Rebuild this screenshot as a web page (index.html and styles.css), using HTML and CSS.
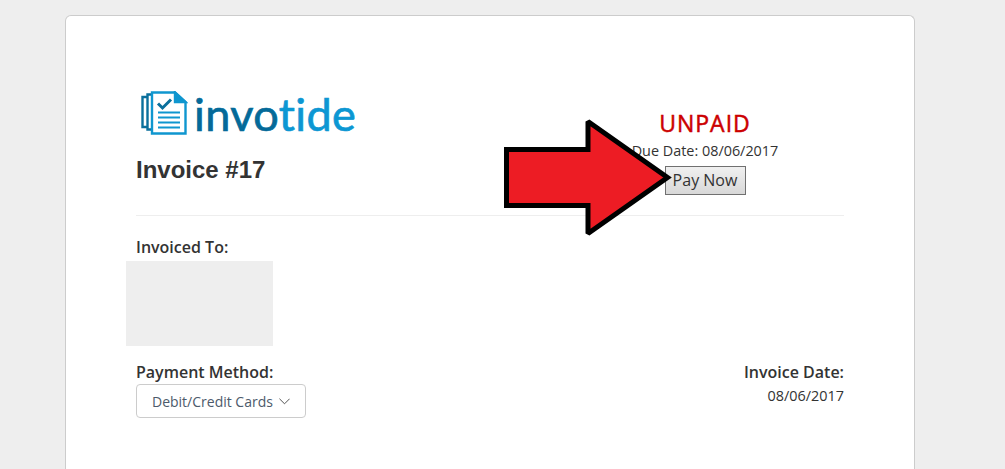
FILE: index.html
```html
<!DOCTYPE html>
<html lang="en">
<head>
    <meta charset="UTF-8">
    <meta name="viewport" content="width=device-width, initial-scale=1.0">
    <title>Invoice #17</title>
    <link rel="stylesheet" href="styles.css">
</head>
<body>
    <div class="card">
        <!-- header -->
        <div class="header">
            <div class="brand">
                <div class="logo">
                    <svg class="logo-icon" width="48" height="44" viewBox="0 0 48 44" fill="none" stroke="#0f7fb0" stroke-width="2.4">
                        <path d="M7 6H2.5V36H7" stroke="#0a6f9c"/>
                        <path d="M11 3.5H7.5V38.5H11" stroke="#0a6f9c"/>
                        <path d="M12 1.5H35L45.5 11V42.5H12Z" stroke="#0f96cf"/>
                        <path d="M35 1.5V11H45.5Z" fill="#0f96cf" stroke="#0f96cf"/>
                        <path d="M18 12.5L22.5 17L31 8.5" stroke="#0a6f9c" stroke-width="3"/>
                        <path d="M18 21.5H40M18 26.5H40M18 31.5H40M18 36.5H40" stroke="#0f96cf" stroke-width="2.2"/>
                    </svg>
                    <span class="logo-text"><span class="logo-dark">invo</span><span class="logo-light">tide</span></span>
                </div>
                <h1 class="invoice-no">Invoice #17</h1>
            </div>
            <div class="status">
                <div class="status-label">UNPAID</div>
                <div class="due">Due Date: 08/06/2017</div>
                <button class="pay" type="button">Pay Now</button>
            </div>
        </div>

        <hr class="divider">

        <div class="label">Invoiced To:</div>
        <div class="redacted"></div>

        <!-- payment method and date -->
        <div class="meta">
            <div>
                <div class="label">Payment Method:</div>
                <button class="method" type="button">
                    <span>Debit/Credit Cards</span>
                    <svg width="12" height="7" viewBox="0 0 12 7" fill="none" stroke="#444" stroke-width="1"><path d="M.5.5L6 6L11.5.5"/></svg>
                </button>
            </div>
            <div class="date">
                <div class="label">Invoice Date:</div>
                <div class="date-value">08/06/2017</div>
            </div>
        </div>

        <svg class="arrow" width="172" height="122" viewBox="0 0 172 122">
            <path d="M3.5 30.5H85V2.5L164.5 58.5L85 114.5V86.5H3.5Z" fill="#ed1c24" stroke="#000" stroke-width="5" stroke-miterlimit="2"/>
        </svg>
    </div>
</body>
</html>
```

FILE: styles.css
```css
html, body {
    height: 469px;
}

body {
    margin: 0;
    overflow: hidden;
    background-color: #eeeeee;
    font-family: 'Open Sans', sans-serif;
    font-size: 14.4px;
    color: #333;
}

.card {
    position: relative;
    box-sizing: border-box;
    width: 850px;
    height: 454px;
    margin: 15px 0 0 65px;
    padding: 73px 70px 0;
    background-color: #fff;
    border: 1px solid #ccc;
    border-bottom: 0;
    border-radius: 6px 6px 0 0;
}

.header {
    display: flex;
    justify-content: space-between;
}

.logo {
    display: flex;
    align-items: center;
    gap: 6px;
    height: 48px;
    margin-left: 4px;
}

.logo-text {
    padding-top: 2px;
    font-family: 'Lato', sans-serif;
    font-size: 45px;
    line-height: 48px;
    letter-spacing: 0.4px;
    -webkit-text-stroke: 0.7px;
}

.logo-dark {
    color: #046a99;
}

.logo-light {
    color: #0c97d3;
}

.invoice-no {
    margin: 18px 0 0;
    font-family: 'Liberation Sans', sans-serif;
    font-size: 24px;
    line-height: 30px;
    font-weight: bold;
    color: #333;
}

.status {
    width: 278px;
    padding-top: 19px;
    text-align: center;
}

.status-label {
    font-size: 23px;
    line-height: 30px;
    letter-spacing: 1px;
    -webkit-text-stroke: 0.5px;
    color: #cc0000;
}

.due {
    line-height: 18px;
    margin-top: 4px;
}

.pay {
    display: block;
    width: 81px;
    height: 29px;
    margin: 6px auto 0;
    padding: 0 0 2px;
    font-family: 'Open Sans', sans-serif;
    font-size: 16px;
    color: #333;
    background: linear-gradient(#f0f0f0, #d8d8d8);
    border: 1px solid #707070;
}

.divider {
    height: 1px;
    margin: 20px 0 20px;
    border: 0;
    background-color: #eee;
}

.label {
    font-size: 16px;
    line-height: 22px;
    font-weight: 600;
    color: #333;
}

.redacted {
    width: 147px;
    height: 85px;
    margin: 3px 0 0 -10px;
    background-color: #eeeeee;
}

.meta {
    display: flex;
    justify-content: space-between;
    margin-top: 15px;
}

.method {
    display: flex;
    align-items: center;
    gap: 6px;
    box-sizing: border-box;
    width: 170px;
    height: 34px;
    margin-top: 1px;
    padding: 0 15px;
    font-family: 'Open Sans', sans-serif;
    font-size: 14px;
    white-space: nowrap;
    color: #4d5a6b;
    background-color: #fff;
    border: 1px solid #ccc;
    border-radius: 4px;
}

.date {
    text-align: right;
}

.date-value {
    margin-top: 4px;
    line-height: 18px;
}

/* big red arrow drawn over the card */
.arrow {
    position: absolute;
    left: 437px;
    top: 103px;
}
```
